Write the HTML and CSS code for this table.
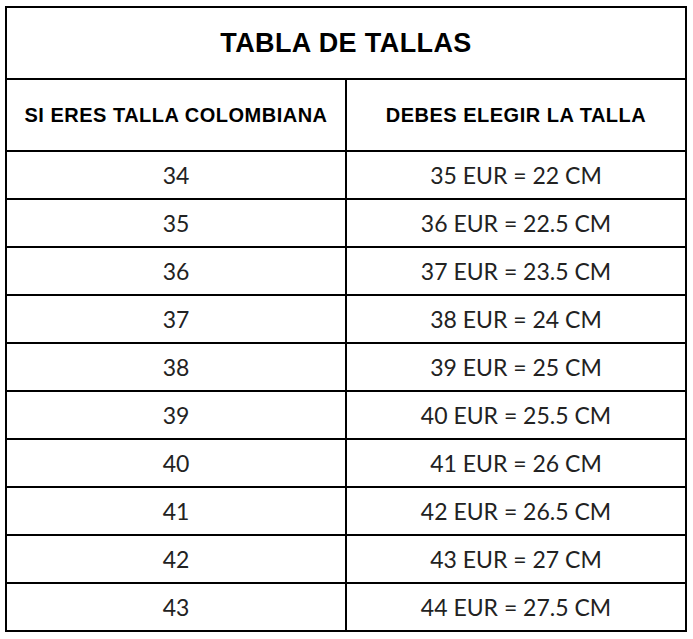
FILE: index.html
```html
<!DOCTYPE html>
<html lang="es">
<head>
<meta charset="utf-8">
<title>Tabla de tallas</title>
<link rel="stylesheet" href="styles.css">
</head>
<body>
<div class="sheet">
  <div class="grid">
    <div class="cell title">TABLA DE TALLAS</div>
    <div class="cell head">SI ERES TALLA COLOMBIANA</div>
    <div class="cell head">DEBES ELEGIR LA TALLA</div>
    <div class="cell data">34</div><div class="cell data">35 EUR = 22 CM</div>
    <div class="cell data">35</div><div class="cell data">36 EUR = 22.5 CM</div>
    <div class="cell data">36</div><div class="cell data">37 EUR = 23.5 CM</div>
    <div class="cell data">37</div><div class="cell data">38 EUR = 24 CM</div>
    <div class="cell data">38</div><div class="cell data">39 EUR = 25 CM</div>
    <div class="cell data">39</div><div class="cell data">40 EUR = 25.5 CM</div>
    <div class="cell data">40</div><div class="cell data">41 EUR = 26 CM</div>
    <div class="cell data">41</div><div class="cell data">42 EUR = 26.5 CM</div>
    <div class="cell data">42</div><div class="cell data">43 EUR = 27 CM</div>
    <div class="cell data">43</div><div class="cell data">44 EUR = 27.5 CM</div>
  </div>
</div>
</body>
</html>
```
FILE: styles.css
```css
html, body {
  margin: 0;
  padding: 0;
  background: #ffffff;
}
.sheet {
  padding: 6px 0 0 5px;
}
.grid {
  display: grid;
  width: 678px;
  grid-template-columns: 338px 338px;
  grid-template-rows: 70px 70px repeat(10, 46px);
  gap: 2px;
  padding: 2px;
  background: #000000;
}
.cell {
  background: #ffffff;
  display: flex;
  align-items: center;
  justify-content: center;
  color: #000000;
  white-space: nowrap;
}
.title {
  grid-column: 1 / 3;
  font-family: "Liberation Sans", Arial, sans-serif;
  font-weight: bold;
  font-size: 27px;
  letter-spacing: 0.4px;
}
.head {
  font-family: "Liberation Sans", Arial, sans-serif;
  font-weight: bold;
  font-size: 20px;
  letter-spacing: 0.5px;
}
.data {
  font-family: Lato, "Open Sans", sans-serif;
  font-weight: 400;
  font-size: 23px;
  color: #222222;
}
```
